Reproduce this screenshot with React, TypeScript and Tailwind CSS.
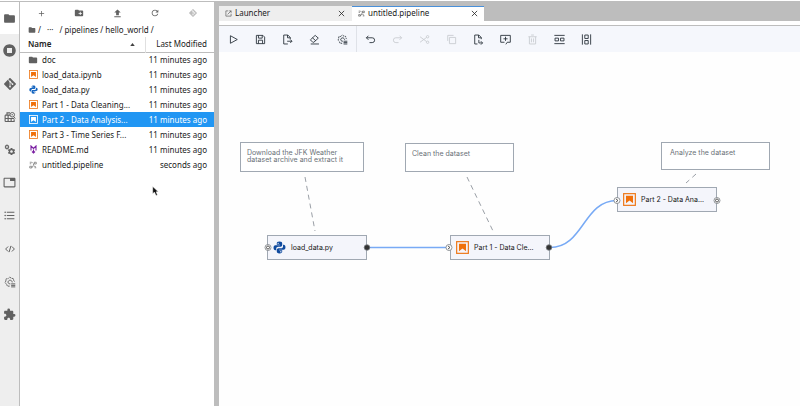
import React from 'react';
import clsx from 'clsx';
import {
  MdAdd,
  MdCreateNewFolder,
  MdExtension,
  MdFolder,
  MdFormatListBulleted,
  MdRefresh,
  MdSettings,
  MdStopCircle,
  MdTab,
  MdUpload,
} from 'react-icons/md';
import { SiGit } from 'react-icons/si';

type IconProps = { className?: string };

// Outline icon on a 32 unit grid
const Stroke: React.FC<IconProps & { children: React.ReactNode }> = ({ className, children }) => (
  <svg viewBox="0 0 32 32" fill="none" stroke="currentColor" strokeWidth="2.6" className={className}>
    {children}
  </svg>
);

const PipelineIcon: React.FC<IconProps> = ({ className }) => (
  <Stroke className={className}>
    <path d="M3 5h8M3 11h6M21 5h8v7h-8zM3 21h8v7H3zM22 27h7M11 25c10 0 4-16 10-16M12 5l4 4M20 20l8 4" />
  </Stroke>
);

const RuntimeIcon: React.FC<IconProps> = ({ className }) => (
  <Stroke className={className}>
    <path strokeDasharray="5 1.5" d="M15 27H9l-2-5-4-4 2-5V8l6-1 4-4 5 3 5 1 1 5 3 4" />
    <path d="M17 21c-5 0-7-3-6-6s5-5 8-3 3 4 3 5" />
    <path d="M19 21h11M19 25h11M19 29h11" />
  </Stroke>
);

const CodeIcon: React.FC<IconProps> = ({ className }) => (
  <Stroke className={className}>
    <path strokeWidth="3.2" d="M10 8l-8 8 8 8M22 8l8 8-8 8M19 6l-6 20" />
  </Stroke>
);

const PropertyIcon: React.FC<IconProps> = ({ className }) => (
  <Stroke className={className}>
    <path strokeWidth="3" d="M3 11h13M3 28V11M8 11V5h8M3 28h24v-6M3 20h24M11 11v17M19 20v8" />
    <circle cx="22" cy="10" r="6" />
    <path d="M26 15l4 5M20 10h4" />
  </Stroke>
);

const GearsIcon: React.FC<IconProps> = ({ className }) => (
  <span className={clsx('relative block', className)}>
    <MdSettings className="absolute top-0 left-0 size-[6px]" />
    <MdSettings className="absolute right-0 bottom-0 size-[9px]" />
  </span>
);

const NotebookIcon: React.FC<IconProps & { light?: boolean }> = ({ className, light }) => (
  <svg viewBox="0 0 14 14" className={className}>
    <rect x="0.7" y="0.7" width="12.6" height="12.6" fill="none" stroke={light ? '#fff' : '#ee7a1c'} strokeWidth="1.3" />
    <path d="M3.2 3h7.6v8L7 8.2 3.2 11z" fill={light ? '#fff' : '#f0700a'} />
  </svg>
);

const PythonIcon: React.FC<IconProps> = ({ className }) => (
  <svg viewBox="0 0 24 24" fill="currentColor" className={className}>
    <path d="M12 1C8 1 7 2.500 7 4.500V7h6v1H4.500C2 8 1 10 1 12.500S2 17 4.500 17H6v-3c0-2 1.500-3.500 3.500-3.500h5C16 10.500 17 9 17 7.500v-3C17 2.500 16 1 12 1zM9.500 3a1.200 1.200 0 1 1 0 2.400 1.200 1.200 0 0 1 0-2.400z" />
    <path d="M12 23c4 0 5-1.500 5-3.500V17h-6v-1h8.500c2.500 0 3.500-2 3.500-4.500S22 7 19.500 7H18.500v3c0 2-1.500 3.500-3.500 3.500h-5C8.500 13.500 7 15 7 16.500v3C7 21.500 8 23 12 23zM14.500 21a1.200 1.200 0 1 1 0-2.400 1.200 1.200 0 0 1 0 2.400z" />
  </svg>
);

const MarkdownIcon: React.FC<IconProps> = ({ className }) => (
  <svg viewBox="0 0 16 18" fill="none" stroke="#7b1fa2" strokeWidth="2.200" className={className}>
    <path d="M3 11V2l5 5 5-5v9" />
    <path d="M8 9v6M5 13l3 3 3-3" />
  </svg>
);

const CloseIcon: React.FC<IconProps> = ({ className }) => (
  <svg viewBox="0 0 8 8" stroke="currentColor" strokeWidth="0.9" className={className}>
    <path d="M1 1l6 6M7 1l-6 6" />
  </svg>
);

const LaunchIcon: React.FC<IconProps> = ({ className }) => (
  <Stroke className={className}>
    <path d="M15 4H4v24h24V17M19 4h9v9M28 4L12 20" />
  </Stroke>
);

const sidebarItems = [
  { label: 'File Browser', Icon: MdFolder, size: 'size-[13px]' },
  { label: 'Running Terminals and Kernels', Icon: MdStopCircle, size: 'size-[15px]' },
  { label: 'Git', Icon: SiGit, size: 'size-[12px]' },
  { label: 'Property Inspector', Icon: PropertyIcon, size: 'size-[12px]' },
  { label: 'Component Settings', Icon: GearsIcon, size: 'size-[12px]' },
  { label: 'Open Tabs', Icon: MdTab, size: 'size-[13px]' },
  { label: 'Table of Contents', Icon: MdFormatListBulleted, size: 'size-[13px]' },
  { label: 'Code Snippets', Icon: CodeIcon, size: 'size-[10px]' },
  { label: 'Runtimes', Icon: RuntimeIcon, size: 'size-[12px]' },
  { label: 'Extension Manager', Icon: MdExtension, size: 'size-[13px]' },
];

const files = [
  { name: 'doc', kind: 'folder', modified: '11 minutes ago' },
  { name: 'load_data.ipynb', kind: 'notebook', modified: '11 minutes ago' },
  { name: 'load_data.py', kind: 'python', modified: '11 minutes ago' },
  { name: 'Part 1 - Data Cleaning...', kind: 'notebook', modified: '11 minutes ago' },
  { name: 'Part 2 - Data Analysis...', kind: 'notebook', modified: '11 minutes ago', selected: true },
  { name: 'Part 3 - Time Series F...', kind: 'notebook', modified: '11 minutes ago' },
  { name: 'README.md', kind: 'markdown', modified: '11 minutes ago' },
  { name: 'untitled.pipeline', kind: 'pipeline', modified: 'seconds ago' },
];

const FileIcon: React.FC<{ kind: string; selected?: boolean }> = ({ kind, selected }) => {
  if (kind === 'folder') return <MdFolder className="size-[10px] text-[#616161]" />;
  if (kind === 'notebook') return <NotebookIcon className="size-[9px]" light={selected} />;
  if (kind === 'python') return <PythonIcon className="size-[9px] text-[#1565c0]" />;
  if (kind === 'markdown') return <MarkdownIcon className="size-[9px]" />;
  return <PipelineIcon className="size-[8px] text-[#616161]" />;
};

const toolbarItems: { label: string; icon: React.ReactNode; disabled?: boolean; divider?: boolean }[] = [
  { label: 'Run Pipeline', icon: <path d="M7 5v22l20-11z" /> },
  { label: 'Save Pipeline', icon: <path d="M4 4h19l5 5v19H4zM10 4v8h11V4M10 28V18h12v10" /> },
  { label: 'Export Pipeline', icon: <path d="M24 15v-5l-7-7H5v26h12M16 3v8h8M15 21h14M24 16l5 5-5 5" /> },
  { label: 'Clear Pipeline', icon: <path d="M5 29h24M11 24l-7-7L18 4l9 8-13 12zM10 11l10 9" /> },
  {
    label: 'Open Runtimes',
    icon: (
      <>
        <path strokeDasharray="4 2" d="M15 27H9l-2-5-4-4 2-5V8l6-1 4-4 5 3 5 1 1 5 3 4" />
        <path d="M17 21c-5 0-7-3-6-6s5-5 8-3 3 4 3 5M19 21h11M19 25h11M19 29h11" />
      </>
    ),
    divider: true,
  },
  { label: 'Undo', icon: <path d="M10 5l-6 6 6 6M4 11h17a7 7 0 0 1 0 14h-8" /> },
  { label: 'Redo', icon: <path d="M22 5l6 6-6 6M28 11H11a7 7 0 0 0 0 14h8" />, disabled: true },
  {
    label: 'Cut',
    icon: (
      <>
        <circle cx="25" cy="8" r="3.500" />
        <circle cx="25" cy="24" r="3.500" />
        <path d="M22 10L3 24M22 22L3 8" />
      </>
    ),
    disabled: true,
  },
  { label: 'Copy', icon: <path d="M10 10h18v18H10zM5 20V4h17" />, disabled: true },
  { label: 'Paste', icon: <path d="M13 29H5V3h12l7 7v5M16 3v8h8M17 17v9h10M23 21l5 5-5 5" /> },
  { label: 'Add Comment', icon: <path d="M17 30l4-6h9V4H2v20h11M16 8v12M10 14h12" /> },
  { label: 'Delete', icon: <path d="M4 8h24M7 8v21h18V8M12 3h8M13 13v11M19 13v11" />, disabled: true },
  { label: 'Arrange Horizontally', icon: <path d="M1 4h30M1 28h30M3 12h10v8H3zM19 12h10v8H19z" /> },
  { label: 'Arrange Vertically', icon: <path d="M4 1v30M28 1v30M11 3h10v10H11zM11 19h10v10H11z" /> },
];

const nodes = [
  { label: 'load_data.py', python: true, place: 'left-[48px] top-[183px]' },
  { label: 'Part 1 - Data Cle...', python: false, place: 'left-[231px] top-[183px]' },
  { label: 'Part 2 - Data Ana...', python: false, place: 'left-[398px] top-[135px]' },
];

const comments = [
  { text: 'Download the JFK Weather dataset archive and extract it', place: 'left-[21px] top-[90px] h-[30px] w-[124px]' },
  { text: 'Clean the dataset', place: 'left-[186px] top-[91px] h-[29px] w-[109px]' },
  { text: 'Analyze the dataset', place: 'left-[442px] top-[90px] h-[28px] w-[109px] pl-[8px]' },
];

const SideBar: React.FC = () => (
  <nav className="flex w-5 shrink-0 flex-col border-r border-[#bdbdbd] bg-[#eeeeee] text-[#616161]">
    {sidebarItems.map(({ label, Icon, size }, i) => (
      <button
        key={label}
        aria-label={label}
        className={clsx('flex shrink-0 items-center justify-center', i === 0 ? 'h-8 bg-white' : 'h-[33px]')}
      >
        <Icon className={size} />
      </button>
    ))}
  </nav>
);

const FileBrowser: React.FC = () => (
  <section className="w-[194px] shrink-0 bg-white font-['Noto_Sans',sans-serif] text-[8px] text-[#212121]">
    <div className="flex h-5 items-center pt-0.5 pl-[2px] text-[#616161]">
      <button aria-label="New Launcher" className="flex w-[38px] justify-center"><MdAdd className="size-[9px]" /></button>
      <button aria-label="New Folder" className="flex w-[38px] justify-center"><MdCreateNewFolder className="size-[10px]" /></button>
      <button aria-label="Upload Files" className="flex w-[38px] justify-center"><MdUpload className="size-[11px]" /></button>
      <button aria-label="Refresh" className="flex w-[38px] justify-center"><MdRefresh className="size-[10px]" /></button>
      <button aria-label="Git Clone" className="flex w-[38px] justify-center text-[#bdbdbd]"><SiGit className="size-[8px]" /></button>
    </div>
    <div className="flex h-[15px] items-center gap-[2px] pl-2">
      <MdFolder className="size-[8px] text-[#616161]" />
      <span>/</span>
      <a href="#parents" className="px-1">···</a>
      <span>/</span>
      <a href="#pipelines">pipelines</a>
      <span>/</span>
      <a href="#hello_world">hello_world</a>
      <span>/</span>
    </div>
    <table className="w-full table-fixed border-collapse">
      <thead>
        <tr className="h-[15px] border-b border-[#bdbdbd]">
          <th className="w-[125px] border-r border-[#e0e0e0] p-0 px-2 text-left font-semibold">
            <button className="flex w-full items-center justify-between">
              Name
              <svg viewBox="0 0 6 4" className="mr-[2px] h-[3px] w-[5px]" fill="#424242"><path d="M3 0l3 4H0z" /></svg>
            </button>
          </th>
          <th className="p-0 pr-[7px] text-right font-normal">Last Modified</th>
        </tr>
      </thead>
      <tbody>
        {files.map((file) => (
          <tr key={file.name} className={clsx('h-[15px]', file.selected && 'bg-[#2196f3] text-white')}>
            <td className="p-0 pl-2 whitespace-nowrap">
              <span className="flex items-center gap-1">
                <span className="flex w-[10px] justify-center">
                  <FileIcon kind={file.kind} selected={file.selected} />
                </span>
                {file.name}
              </span>
            </td>
            <td className="p-0 pr-[7px] text-right whitespace-nowrap">{file.modified}</td>
          </tr>
        ))}
      </tbody>
    </table>
  </section>
);

const TabBar: React.FC = () => (
  <div className="flex h-[19px] shrink-0 items-end bg-[#bdbdbd] font-['Noto_Sans',sans-serif] text-[8px] text-[#212121]">
    <div className="flex h-[15px] w-[133px] items-center bg-[#eeeeee] pr-[7px] pb-px pl-[6px]">
      <LaunchIcon className="mr-[3px] size-[7px] text-[#424242]" />
      <button className="flex-1 text-left">Launcher</button>
      <button aria-label="Close Launcher"><CloseIcon className="size-[7px]" /></button>
    </div>
    <div className="flex h-[15px] w-[132px] items-center border-t border-[#4a90d9] bg-white pr-[6px] pb-[2px] pl-[6px]">
      <PipelineIcon className="mr-[3px] size-[7px] text-[#424242]" />
      <button className="flex-1 text-left">untitled.pipeline</button>
      <button aria-label="Close untitled.pipeline"><CloseIcon className="size-[7px]" /></button>
    </div>
  </div>
);

const Toolbar: React.FC = () => (
  <div className="mt-1 flex h-[27px] shrink-0 border-t border-[#bdbdbd] bg-[#f5f7fc] pl-px">
    {toolbarItems.map(({ label, icon, disabled, divider }) => (
      <button
        key={label}
        aria-label={label}
        disabled={disabled}
        className={clsx(
          'flex items-center justify-center',
          divider ? 'w-[29px] border-r border-[#dfe2e8]' : 'w-[27px]',
          disabled ? 'text-[#c9ccd1]' : 'text-[#2b343b]',
        )}
      >
        <Stroke className="size-[11px]">{icon}</Stroke>
      </button>
    ))}
  </div>
);

const Canvas: React.FC = () => (
  <div className="relative flex-1 overflow-hidden bg-[#fefefe]">
    {comments.map(({ text, place }) => (
      <div key={text} className={clsx('absolute border border-[#a0a8b2] bg-white px-[6px] pt-[6px] text-[7px] leading-[7px] text-[#6a7178]', place)}>
        {text}
      </div>
    ))}
    {nodes.map(({ label, python, place }) => (
      <div key={label} className={clsx('absolute flex h-[25px] w-[100px] items-center gap-[5px] border border-[#a0a8b2] bg-[#f4f5fb] pl-[5px] text-[7px] text-[#161616]', place)}>
        {python ? <PythonIcon className="size-[13px] text-[#0f4a9e]" /> : <NotebookIcon className="size-[13px]" />}
        <span className="whitespace-nowrap">{label}</span>
      </div>
    ))}
    {/* Links, comment connectors and node ports */}
    <svg width="581" height="354" className="pointer-events-none absolute top-0 left-0" fill="none">
      <g stroke="#9a9fa6" strokeDasharray="5 4">
        <path d="M86 125l10 54" />
        <path d="M248 125l26 54" />
        <path d="M477 122l-10 9" />
      </g>
      <g stroke="#78aaf5" strokeWidth="1.5">
        <path d="M148 195.500h79" />
        <path d="M331 195.500c34 0 33-47 67-47" />
      </g>
      <g fill="#fff" stroke="#777c82" strokeWidth="0.8">
        <circle cx="49" cy="195.500" r="3" />
        <circle cx="230" cy="195.500" r="3" />
        <circle cx="398" cy="148.500" r="3" />
        <circle cx="498" cy="148.500" r="3" />
      </g>
      <g stroke="#333" strokeWidth="0.8">
        <circle cx="49" cy="195.500" r="1.500" />
        <circle cx="498" cy="148.500" r="1.500" />
        <path d="M229 194l2 1.500-2 1.500M397 147l2 1.500-2 1.500" />
      </g>
      <g fill="#333" stroke="#777c82" strokeWidth="0.8">
        <circle cx="148" cy="195.500" r="2.800" />
        <circle cx="330" cy="195.500" r="2.800" />
      </g>
    </svg>
  </div>
);

export default function App() {
  return (
    <div className="relative flex h-screen flex-col bg-white pt-px font-['Inter',sans-serif] leading-none">
      <div className="flex min-h-0 flex-1 border-t border-[#bdbdbd]">
        <SideBar />
        <FileBrowser />
        <div className="w-[5px] shrink-0 bg-[#bdbdbd]" />
        <main className="flex min-w-0 flex-1 flex-col bg-white">
          <TabBar />
          <Toolbar />
          <Canvas />
        </main>
      </div>
      {/* Mouse pointer */}
      <svg viewBox="0 0 12 18" className="absolute top-[186px] left-[152px] h-[10px] w-[7px]">
        <path d="M1 1v13l3-3 3 6 2.500-1L7 10.500h4z" fill="#111" stroke="#fff" strokeWidth="0.8" />
      </svg>
    </div>
  );
}
